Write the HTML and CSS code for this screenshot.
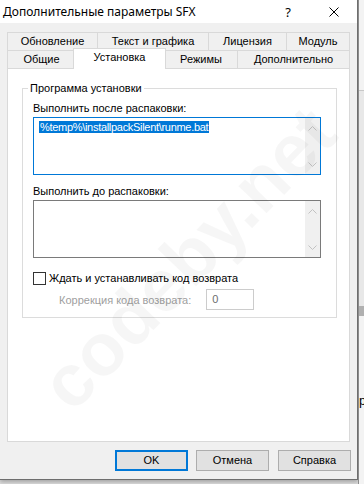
FILE: index.html
```html
<!DOCTYPE html>
<html lang="ru">
<head>
    <meta charset="UTF-8">
    <title>Дополнительные параметры SFX</title>
    <link rel="stylesheet" href="styles.css">
</head>
<body>
    <div class="desktop">
        <div class="dialog">
            <div class="titlebar">
                <span class="title">Дополнительные параметры SFX</span>
                <span class="caption-btn help">?</span>
                <span class="caption-btn close">
                    <svg width="10" height="10" viewBox="0 0 10 10"><path d="M0.5 0.5L9.5 9.5M9.5 0.5L0.5 9.5" stroke="#000" stroke-width="1"/></svg>
                </span>
            </div>

            <div class="client">
                <div class="tabs">
                    <div class="tab-row row-back">
                        <div class="tab">Обновление</div>
                        <div class="tab">Текст и графика</div>
                        <div class="tab">Лицензия</div>
                        <div class="tab">Модуль</div>
                    </div>
                    <div class="tab-row row-front">
                        <div class="tab">Общие</div>
                        <div class="tab active">Установка</div>
                        <div class="tab">Режимы</div>
                        <div class="tab">Дополнительно</div>
                    </div>
                </div>

                <div class="panel">
                    <fieldset class="group">
                        <legend>Программа установки</legend>

                        <div class="field-label">Выполнить после распаковки:</div>
                        <div class="edit focused">
                            <div class="edit-text"><span class="sel">%temp%\installpackSilent\runme.bat</span></div>
                            <div class="vscroll">
                                <svg width="9" height="5" viewBox="0 0 9 5"><path d="M0.5 4.5L4.5 0.5L8.5 4.5" fill="none" stroke="#c2c2c2"/></svg>
                                <svg width="9" height="5" viewBox="0 0 9 5"><path d="M0.5 0.5L4.5 4.5L8.5 0.5" fill="none" stroke="#c2c2c2"/></svg>
                            </div>
                        </div>

                        <div class="field-label second">Выполнить до распаковки:</div>
                        <div class="edit">
                            <div class="edit-text"></div>
                            <div class="vscroll">
                                <svg width="9" height="5" viewBox="0 0 9 5"><path d="M0.5 4.5L4.5 0.5L8.5 4.5" fill="none" stroke="#c2c2c2"/></svg>
                                <svg width="9" height="5" viewBox="0 0 9 5"><path d="M0.5 0.5L4.5 4.5L8.5 0.5" fill="none" stroke="#c2c2c2"/></svg>
                            </div>
                        </div>

                        <div class="check-row">
                            <span class="checkbox"></span>
                            <span>Ждать и устанавливать код возврата</span>
                        </div>

                        <div class="code-row">
                            <span class="code-label">Коррекция кода возврата:</span>
                            <div class="small-edit">0</div>
                        </div>
                    </fieldset>
                </div>

                <div class="buttons">
                    <div class="btn default">OK</div>
                    <div class="btn">Отмена</div>
                    <div class="btn">Справка</div>
                </div>
            </div>
        </div>

        <div class="behind">
            <div class="behind-top"></div>
            <div class="behind-mid"></div>
            <div class="behind-bar"></div>
            <div class="behind-text">р</div>
        </div>

        <div class="watermark">codeby.net</div>
    </div>
</body>
</html>
```

FILE: styles.css
```css
/* dialog window */
body {
    margin: 0;
    padding: 0;
    font-family: "Liberation Sans", Arial, sans-serif;
    font-size: 11px;
    color: #000;
}

.desktop {
    position: relative;
    display: flex;
    width: 364px;
    height: 484px;
    background: #dcdcdc;
    overflow: hidden;
}

.dialog {
    width: 357px;
    height: 479px;
    background: #f0f0f0;
    border-right: 1px solid #6e6e6e;
    border-bottom: 1px solid #6e6e6e;
    box-shadow: 0 2px 4px rgba(0, 0, 0, 0.25);
    flex-shrink: 0;
}

.titlebar {
    display: flex;
    align-items: center;
    height: 23px;
    background: #fff;
    font-family: "Noto Sans", sans-serif;
    font-size: 12px;
}

.title {
    padding-left: 3px;
    flex: 1;
}

.caption-btn {
    width: 46px;
    display: flex;
    justify-content: center;
    align-items: center;
}

.help {
    font-size: 13px;
}

.client {
    padding: 9px 0 0 7px;
}

/* tabs */
.tab-row {
    display: grid;
    height: 18px;
    width: 343px;
}

.row-back {
    grid-template-columns: 90px 111px 78px 64px;
}

.row-front {
    grid-template-columns: 68px 89px 73px 113px;
}

.tab {
    border-top: 1px solid #d9d9d9;
    border-left: 1px solid #d9d9d9;
    background: #f0f0f0;
    text-align: center;
    line-height: 17px;
    white-space: nowrap;
}

.tab:last-child {
    border-right: 1px solid #d9d9d9;
}

.tab.active {
    position: relative;
    z-index: 1;
    margin: -2px -2px -1px;
    background: #fff;
    border-right: 1px solid #d9d9d9;
    line-height: 16px;
}

.panel {
    box-sizing: border-box;
    width: 343px;
    height: 374px;
    border: 1px solid #d9d9d9;
    background: #fff;
    padding: 12px 12px 0 14px;
}

/* group box */
.group {
    margin: 0;
    padding: 0 15px 7px 10px;
    border: 1px solid #dcdcdc;
    min-width: 0;
}

.group legend {
    padding: 0 2px;
    margin-left: -5px;
    line-height: 14px;
}

.field-label {
    line-height: 14px;
    margin-top: 6px;
}

.field-label.second {
    margin-top: 9px;
}

.edit {
    display: flex;
    box-sizing: border-box;
    height: 58px;
    margin-top: 2px;
    border: 1px solid #7a7a7a;
    background: #fff;
}

.edit.focused {
    border-color: #0078d7;
}

.edit-text {
    flex: 1;
    padding: 3px 0 0 5px;
}

.sel {
    display: inline-block;
    height: 12px;
    line-height: 12px;
    padding: 0 1px;
    letter-spacing: -0.3px;
    background: #0078d7;
    color: #fff;
    white-space: nowrap;
}

.vscroll {
    width: 15px;
    background: #f0f0f0;
    display: flex;
    flex-direction: column;
    justify-content: space-between;
    align-items: center;
    padding: 8px 0 7px;
}

.check-row {
    display: flex;
    align-items: center;
    gap: 3px;
    height: 14px;
    margin-top: 13px;
}

.checkbox {
    box-sizing: border-box;
    width: 13px;
    height: 13px;
    border: 1px solid #333;
    background: #fff;
}

.code-row {
    display: flex;
    align-items: center;
    gap: 15px;
    height: 21px;
    margin-top: 4px;
    padding-left: 26px;
    color: #a0a0a0;
}

.small-edit {
    box-sizing: border-box;
    width: 48px;
    height: 21px;
    border: 1px solid #cccccc;
    padding: 3px 0 0 5px;
    color: #6d6d6d;
}

/* buttons */
.buttons {
    display: flex;
    justify-content: flex-end;
    gap: 8px;
    margin-top: 8px;
    padding-right: 6px;
}

.btn {
    box-sizing: border-box;
    width: 73px;
    height: 21px;
    border: 1px solid #adadad;
    background: #e1e1e1;
    text-align: center;
    line-height: 19px;
}

.btn.default {
    border: 2px solid #0078d7;
    line-height: 17px;
}

.btn:last-child {
    margin-left: 1px;
}

/* window behind */
.behind {
    flex: 1;
    display: flex;
    flex-direction: column;
    background: #f3f3f3;
    border-left: 1px solid #8c8c8c;
}

.behind-top {
    height: 90px;
    border-bottom: 1px solid #c8c8c8;
}

.behind-mid {
    height: 215px;
    background: #e8e8e8;
}

.behind-bar {
    height: 10px;
    background: #b0b0b0;
}

.behind-text {
    margin-top: 78px;
    font-size: 13px;
    line-height: 14px;
}

.watermark {
    position: absolute;
    left: 188px;
    top: 258px;
    transform: translate(-50%, -50%) rotate(-46deg);
    font-family: "Liberation Sans", sans-serif;
    font-weight: bold;
    font-size: 74px;
    color: rgba(0, 0, 0, 0.035);
    white-space: nowrap;
    pointer-events: none;
}
```
